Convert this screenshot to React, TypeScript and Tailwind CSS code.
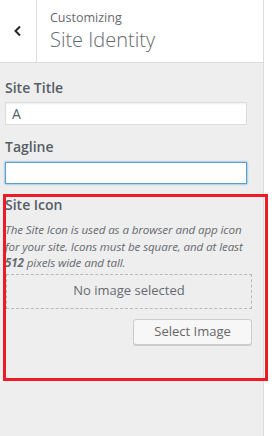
import React from 'react';

export default function App() {
  return (
    <div className="relative w-[277px] h-[436px] bg-white overflow-hidden" style={{ fontFamily: '"Open Sans", "Liberation Sans", sans-serif' }}>
      <div className="w-[264px] h-full bg-[#eeeeee] border-r border-[#dddddd] flex flex-col">
        <div className="flex h-[63px] bg-white border-b border-[#dddddd] shrink-0">
          <button className="w-[37px] h-full border-r border-[#dddddd] flex items-center justify-center">
            <svg width="10" height="12" viewBox="0 0 10 12">
              <path d="M7 1.5 L2.5 6 L7 10.5" fill="none" stroke="#23282d" strokeWidth="2" />
            </svg>
          </button>
          <div className="flex flex-col pl-[13px] pt-[9px]">
            <span className="text-[12.5px] leading-[18px] text-[#666a70]">Customizing</span>
            <span className="text-[20px] leading-[26px] font-light text-[#666a70]">Site Identity</span>
          </div>
        </div>

        <div className="flex flex-col px-[5px] pt-[15px]">
          <label className="text-[14px] font-semibold text-[#555d66] leading-[20px]">Site Title</label>
          <input
            defaultValue="A"
            className="mt-[4px] w-[242px] h-[23px] bg-white border border-[#dddddd] px-[6px] text-[14px] text-[#555d66] outline-none shadow-[inset_0_1px_2px_rgba(0,0,0,0.07)]"
          />
          <label className="mt-[12px] text-[14px] font-semibold text-[#555d66] leading-[20px]">Tagline</label>
          <input
            className="mt-[5px] w-[242px] h-[22px] bg-white border border-[#5b9dd9] px-[6px] text-[14px] outline-none shadow-[0_0_2px_rgba(30,140,190,0.8)]"
          />

          <label className="mt-[11px] text-[14px] font-semibold text-[#555d66] leading-[20px]">Site Icon</label>
          <p className="mt-[7px] w-[250px] text-[11.6px] italic text-[#666a70] leading-[16.5px] tracking-[-0.1px]">
            The Site Icon is used as a browser and app icon for your site. Icons must be square, and at least <strong className="font-bold">512</strong> pixels wide and tall.
          </p>
          <div className="mt-[2px] ml-[1px] w-[246px] h-[35px] border border-dashed border-[#b4b9be] flex items-center justify-center text-[13px] text-[#666a70]">
            No image selected
          </div>
          <div className="flex justify-end w-[247px] mt-[10px]">
            <button className="w-[119px] h-[26px] bg-[#f7f7f7] border border-[#cccccc] rounded-[3px] text-[13px] text-[#666666] shadow-[0_1px_0_#cccccc]">
              Select Image
            </button>
          </div>
        </div>
      </div>

      <div className="absolute left-[3px] top-[194px] w-[265px] h-[187px] border-[3px] border-[#ed1c24]" />
    </div>
  );
}
